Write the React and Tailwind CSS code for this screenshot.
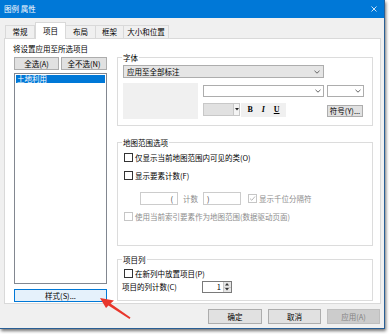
// Legend properties dialog (图例 属性) - 项目 tab
const FONT = { fontFamily: '"Noto Sans CJK SC", "Noto Sans", sans-serif' };

function Chevron({ className = '' }) {
  return (
    <svg width="6" height="4" viewBox="0 0 6 4" className={className}>
      <path d="M0.5 0.8 L3 3.2 L5.5 0.8" fill="none" stroke="#555" strokeWidth="0.9" />
    </svg>
  );
}

function Btn({ children, className = '', disabled = false, focus = false }) {
  return (
    <div
      className={`flex items-center justify-center border leading-none ${
        focus
          ? 'border-[#0078d7] bg-[#e5f1fb] text-black'
          : disabled
          ? 'border-[#bfbfbf] bg-[#cccccc] text-[#838383]'
          : 'border-[#adadad] bg-[#e1e1e1] text-black'
      } ${className}`}
    >
      {children}
    </div>
  );
}

function Check({ label, checked = false, disabled = false, className = '' }) {
  return (
    <div className={`flex items-center h-[9px] ${className}`}>
      <div
        className={`w-[9px] h-[9px] border bg-white flex items-center justify-center ${
          disabled ? 'border-[#c6c6c6]' : 'border-[#333]'
        }`}
      >
        {checked && (
          <svg width="7" height="7" viewBox="0 0 7 7">
            <path d="M1 3.6 L2.8 5.3 L6 1.5" fill="none" stroke={disabled ? '#b0b0b0' : '#000'} strokeWidth="0.9" />
          </svg>
        )}
      </div>
      <span className={`ml-[2px] leading-none whitespace-nowrap ${disabled ? 'text-[#8d8d8d]' : 'text-black'}`}>{label}</span>
    </div>
  );
}

function Group({ title, className = '', children }) {
  return (
    <div className={`relative border border-[#dcdcdc] ${className}`}>
      <span className="absolute -top-[5px] left-[4px] bg-white px-[1px] leading-[9px]">{title}</span>
      {children}
    </div>
  );
}

function Tab({ label, active = false, w }) {
  return (
    <div
      className={`flex items-center justify-center border border-[#d9d9d9] ${
        active ? 'h-[17px] bg-white border-b-0 -mb-px relative z-10' : 'h-[13px] bg-[#f0f0f0] border-b-0 -ml-px first:ml-0'
      } ${w}`}
    >
      <span className="leading-none">{label}</span>
    </div>
  );
}

export default function App() {
  return (
    <div className="w-[389px] h-[334px] bg-white relative overflow-hidden text-[7.5px] text-black" style={FONT}>
      <div className="w-[385px] h-[329px] bg-[#f0f0f0] border-r border-b border-[#2a5f95] shadow-[1px_2px_3px_rgba(0,0,0,0.55)] flex flex-col">
        {/* title bar */}
        <div className="h-[18px] bg-[#0078d7] flex items-center justify-between pl-[4px] pr-[7px] text-white">
          <span className="leading-none">图例 属性</span>
          <svg width="6" height="6" viewBox="0 0 6 6">
            <path d="M0.5 0.5 L5.5 5.5 M5.5 0.5 L0.5 5.5" stroke="#fff" strokeWidth="0.8" />
          </svg>
        </div>

        {/* tabs */}
        <div className="mt-[4px] h-[16px] flex items-end pl-[5px]">
          <Tab label="常规" w="w-[30px]" />
          <Tab label="项目" w="w-[31px]" active />
          <Tab label="布局" w="w-[31px]" />
          <Tab label="框架" w="w-[29px]" />
          <Tab label="大小和位置" w="w-[46px]" />
        </div>

        {/* panel */}
        <div className="ml-[4px] w-[377px] h-[266px] bg-white border border-[#d9d9d9] flex pl-[9px]">
          {/* left column */}
          <div className="w-[93px] flex flex-col">
            <div className="mt-[6px] -ml-px h-[8px] leading-[8px] whitespace-nowrap">将设置应用至所选项目</div>
            <div className="mt-[4px] flex gap-[2px]">
              <Btn className="w-[45px] h-[13px]">全选(A)</Btn>
              <Btn className="w-[46px] h-[13px]">全不选(N)</Btn>
            </div>
            <div className="mt-[3px] h-[211px] border border-[#828790] bg-white p-px">
              <div className="h-[8px] bg-[#0078d7] text-white leading-[8px] pl-px">土地利用</div>
            </div>
            <Btn focus className="mt-[5px] h-[13px]">样式(S)...</Btn>
          </div>

          {/* right column */}
          <div className="ml-[10px] w-[256px] flex flex-col">
            <Group title="字体" className="mt-[18px] h-[69px]">
              <div className="pt-[7px] pl-[5px]">
                <div className="w-[201px] h-[13px] bg-[#e5e5e5] border border-[#adadad] flex items-center justify-between pl-[3px] pr-[3px]">
                  <span className="leading-none">应用至全部标注</span>
                  <Chevron />
                </div>
                <div className="mt-[5px] flex">
                  <div className="w-[75px] h-[36px] bg-[#f0f0f0]" />
                  <div className="ml-[5px] flex flex-col">
                    <div className="mt-[2px] flex">
                      <div className="w-[121px] h-[12px] border border-[#adadad] bg-white flex items-center justify-end pr-[2px]">
                        <Chevron />
                      </div>
                      <div className="ml-[3px] w-[37px] h-[12px] border border-[#adadad] bg-white flex items-center justify-end pr-[2px]">
                        <Chevron />
                      </div>
                    </div>
                    <div className="mt-[6px] flex items-start">
                      <div className="w-[37px] h-[13px] border border-[#c8c8c8] bg-[#e1e1e1] flex justify-end">
                        <div className="w-[6px] h-full border-l border-[#c8c8c8] bg-[#f4f4f4] flex items-center justify-center">
                          <svg width="4" height="3" viewBox="0 0 4 3">
                            <path d="M0 0 L4 0 L2 2.5 Z" fill="#222" />
                          </svg>
                        </div>
                      </div>
                      <div
                        className="ml-[1px] w-[45px] h-[14px] bg-[#f0f0f0] flex items-center justify-around px-[2px] text-[8px] font-bold leading-none"
                        style={{ fontFamily: '"Liberation Serif", serif' }}
                      >
                        <span>B</span>
                        <span className="italic">I</span>
                        <span className="underline">U</span>
                      </div>
                      <Btn className="ml-[41px] mt-[2px] w-[36px] h-[12px]">符号(Y)...</Btn>
                    </div>
                  </div>
                </div>
              </div>
            </Group>

            <Group title="地图范围选项" className="mt-[16px] h-[104px]">
              <div className="pl-[6px] flex flex-col">
                <Check className="mt-[10px]" label="仅显示当前地图范围内可见的类(O)" />
                <Check className="mt-[9px]" label="显示要素计数(F)" />
                <div className="mt-[12px] ml-[16px] flex items-center">
                  <div className="w-[38px] h-[13px] border border-[#cccccc] bg-white flex items-center justify-end pr-[4px] text-[#444] leading-none">(</div>
                  <span className="ml-[5px] text-[#8d8d8d] leading-none">计数</span>
                  <div className="ml-[5px] w-[38px] h-[13px] border border-[#cccccc] bg-white flex items-center pl-[3px] text-[#444] leading-none">)</div>
                  <Check className="ml-[7px]" label="显示千位分隔符" checked disabled />
                </div>
                <Check className="mt-[7px]" label="使用当前索引要素作为地图范围(数据驱动页面)" disabled />
              </div>
            </Group>

            <Group title="项目列" className="mt-[13px] h-[42px]">
              <div className="pl-[6px] flex flex-col">
                <Check className="mt-[9px]" label="在新列中放置项目(P)" />
                <div className="mt-[3px] -ml-[2px] flex items-center">
                  <span className="leading-none">项目的列计数(C)</span>
                  <div className="ml-[25px] w-[30px] h-[12px] border border-[#7a7a7a] bg-white flex">
                    <div className="flex-1 flex items-center justify-end pr-[2px] leading-none">1</div>
                    <div className="w-[8px] flex flex-col border-l border-[#c8c8c8]">
                      <div className="flex-1 bg-[#e6e6e6] flex items-center justify-center border-b border-[#c8c8c8]">
                        <svg width="4" height="3" viewBox="0 0 4 3"><path d="M0 2.5 L4 2.5 L2 0 Z" fill="#333" /></svg>
                      </div>
                      <div className="flex-1 bg-[#e6e6e6] flex items-center justify-center">
                        <svg width="4" height="3" viewBox="0 0 4 3"><path d="M0 0 L4 0 L2 2.5 Z" fill="#333" /></svg>
                      </div>
                    </div>
                  </div>
                </div>
              </div>
            </Group>
          </div>
        </div>

        {/* bottom buttons */}
        <div className="mt-[5px] flex justify-end gap-[6px] pr-[4px]">
          <Btn className="w-[54px] h-[15px]">确定</Btn>
          <Btn className="w-[53px] h-[15px]">取消</Btn>
          <Btn disabled className="w-[53px] h-[15px]">应用(A)</Btn>
        </div>
      </div>

      {/* red annotation arrow */}
      <svg className="absolute left-0 top-0 pointer-events-none" width="389" height="334" viewBox="0 0 389 334">
        <polygon points="100,298 114,300.5 110.5,303.5 130.5,317.5 129.5,319 108.5,305.5 106,308" fill="#e8362c" />
      </svg>
    </div>
  );
}
